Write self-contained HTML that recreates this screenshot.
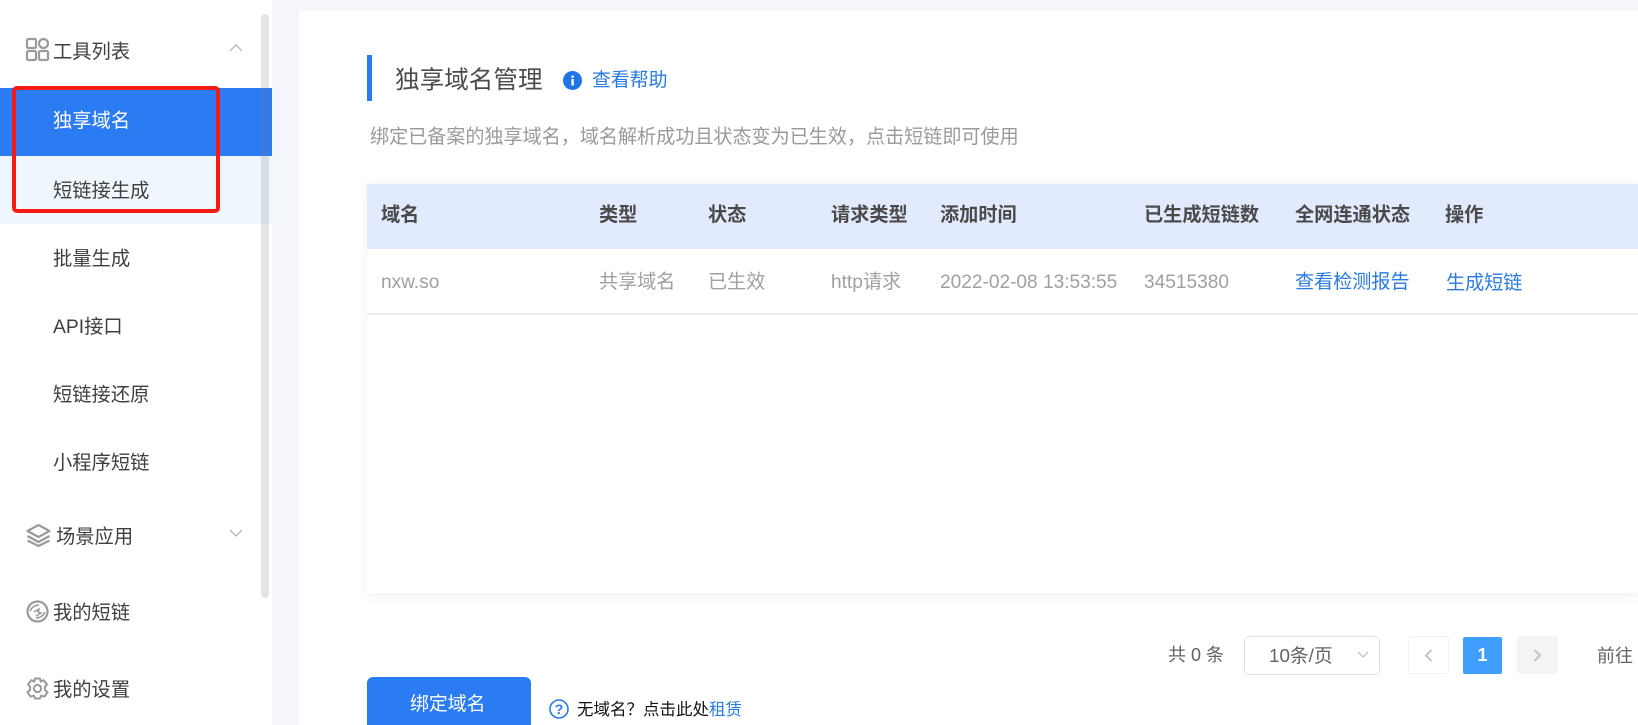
<!DOCTYPE html>
<html lang="zh">
<head>
<meta charset="utf-8">
<title>独享域名管理</title>
<style>
html,body{margin:0;padding:0;width:1638px;height:725px;overflow:hidden;background:#f4f6fc;}
body{position:relative;font-family:"Liberation Sans","Noto Sans CJK SC",sans-serif;}
.a{position:absolute;white-space:nowrap;}
.t{position:absolute;white-space:nowrap;line-height:26px;height:26px;}
.m{font-size:19.3px;color:#3f3f3f;}
.h{font-size:19.2px;font-weight:700;color:#4a4a4a;top:203px;}
.c{font-size:19.1px;color:#a0a0a0;top:270px;}
.l{color:#2a7ae4;}
svg{position:absolute;overflow:visible;}
</style>
</head>
<body>
<!-- sidebar -->
<div class="a" style="left:0;top:0;width:272px;height:725px;background:#fff;"></div>
<div class="a" style="left:0;top:88px;width:272px;height:68px;background:#2b7bf2;"></div>
<div class="a" style="left:0;top:156px;width:272px;height:68px;background:#eff6fe;"></div>

<svg style="left:26px;top:38px" width="23" height="23" viewBox="0 0 23 23" fill="none" stroke="#9a9a9a" stroke-width="2.2"><rect x="1" y="1" width="9" height="9" rx="1.5"/><circle cx="17.5" cy="5.5" r="4.5"/><rect x="1" y="13" width="9" height="9" rx="1.5"/><rect x="13" y="13" width="9" height="9" rx="1.5"/></svg>
<div class="t m" style="left:53px;top:40px;">工具列表</div>
<svg style="left:229px;top:43px" width="14" height="9" viewBox="0 0 14 9" fill="none" stroke="#a4a4a4" stroke-width="1"><path d="M1 8L7 2L13 8"/></svg>

<div class="t m" style="left:53px;top:109px;color:#fff;">独享域名</div>
<div class="t m" style="left:53px;top:179px;">短链接生成</div>
<div class="t m" style="left:53px;top:247px;">批量生成</div>
<div class="t m" style="left:53px;top:315px;">API接口</div>
<div class="t m" style="left:53px;top:383px;">短链接还原</div>
<div class="t m" style="left:53px;top:451px;">小程序短链</div>

<svg style="left:26px;top:524px" width="25" height="23" viewBox="0 0 25 23" fill="none" stroke="#9a9a9a" stroke-width="2.2" stroke-linejoin="round"><path d="M12.5 1L23.5 7L12.5 13L1.5 7Z"/><path d="M1.5 12L12.5 18L23.5 12"/><path d="M1.5 16.5L12.5 22L23.5 16.5"/></svg>
<div class="t m" style="left:56px;top:525px;">场景应用</div>
<svg style="left:229px;top:529px" width="14" height="9" viewBox="0 0 14 9" fill="none" stroke="#a4a4a4" stroke-width="1"><path d="M1 1L7 7L13 1"/></svg>

<svg style="left:26px;top:600px" width="23" height="23" viewBox="0 0 23 23" fill="none" stroke="#9a9a9a" stroke-width="2.2"><circle cx="11.5" cy="11.5" r="10"/><path stroke-width="1.5" d="M4 11C6 7 9 5 13 5M19 12C17 16 14 18 10 18M8 12L13 9L12 12L15 13L10 16"/></svg>
<div class="t m" style="left:53px;top:601px;">我的短链</div>

<svg style="left:26px;top:677px" width="23" height="23" viewBox="0 0 23 23" fill="none" stroke="#9a9a9a" stroke-width="2" stroke-linejoin="round"><path d="M9 1.5H14L14.8 4.6L17.6 3.2L21 7.4L18.9 9.8L19 13L21.5 15.2L18.5 19.6L15.2 18.6L14 21.5H9L7.8 18.6L4.5 19.6L1.5 15.2L4 13L4.1 9.8L2 7.4L5.4 3.2L8.2 4.6Z"/><circle cx="11.5" cy="11.5" r="3.6"/></svg>
<div class="t m" style="left:53px;top:678px;">我的设置</div>

<!-- sidebar scrollbar -->
<div class="a" style="left:261px;top:14px;width:8px;height:584px;border-radius:4px;background:rgba(110,125,140,.2);"></div>

<!-- red annotation -->
<div class="a" style="left:12px;top:86px;width:208px;height:126.5px;box-sizing:border-box;border:4px solid #f31b14;border-radius:5px;"></div>

<!-- main card -->
<div class="a" style="left:299px;top:11px;width:1339px;height:714px;background:#fff;"></div>

<div class="a" style="left:367px;top:55px;width:5px;height:46px;background:#2b7bf2;"></div>
<div class="t" style="left:395px;top:66px;height:30px;line-height:30px;font-size:24.6px;color:#4c4c4c;">独享域名管理</div>
<svg style="left:563px;top:71px" width="19" height="19" viewBox="0 0 19 19"><circle cx="9.5" cy="9.5" r="9.5" fill="#2274e6"/><rect x="8.4" y="8" width="2.4" height="6.5" fill="#fff"/><rect x="8.4" y="4.6" width="2.4" height="2.2" fill="#fff"/></svg>
<div class="t l" style="left:592px;top:68px;font-size:18.9px;">查看帮助</div>
<div class="t" style="left:370px;top:125px;font-size:19.09px;color:#9a9a9a;">绑定已备案的独享域名&#xFF0C;域名解析成功且状态变为已生效&#xFF0C;点击短链即可使用</div>

<!-- table -->
<div class="a" style="left:367px;top:184px;width:1271px;height:409px;background:#fff;box-shadow:0 2px 10px rgba(60,90,160,.1);"></div>
<div class="a" style="left:367px;top:184px;width:1271px;height:65px;background:#e1ebfd;"></div>
<div class="a" style="left:367px;top:313px;width:1271px;height:2px;background:#eeeeee;"></div>

<div class="t h" style="left:381px;">域名</div>
<div class="t h" style="left:599px;">类型</div>
<div class="t h" style="left:708px;">状态</div>
<div class="t h" style="left:831px;">请求类型</div>
<div class="t h" style="left:940px;">添加时间</div>
<div class="t h" style="left:1144px;">已生成短链数</div>
<div class="t h" style="left:1295px;">全网连通状态</div>
<div class="t h" style="left:1445px;">操作</div>

<div class="t c" style="left:381px;">nxw.so</div>
<div class="t c" style="left:599px;">共享域名</div>
<div class="t c" style="left:708px;">已生效</div>
<div class="t c" style="left:831px;">http请求</div>
<div class="t c" style="left:940px;">2022-02-08 13:53:55</div>
<div class="t c" style="left:1144px;">34515380</div>
<div class="t c l" style="left:1295px;color:#2a7ae4;">查看检测报告</div>
<div class="t c l" style="left:1446px;top:271px;color:#2a7ae4;">生成短链</div>

<!-- pagination -->
<div class="t" style="left:1168px;top:642px;font-size:18px;color:#606266;">共 0 条</div>
<div class="a" style="left:1244px;top:636px;width:136px;height:39px;box-sizing:border-box;border:1px solid #dcdfe6;border-radius:5px;background:#fff;"></div>
<div class="t" style="left:1269px;top:643px;font-size:18.8px;color:#606266;">10条/页</div>
<svg style="left:1357px;top:651px" width="12" height="7" viewBox="0 0 12 7" fill="none" stroke="#c0c4cc" stroke-width="1.4"><path d="M1 1L6 6L11 1"/></svg>
<div class="a" style="left:1408px;top:636px;width:41px;height:38px;box-sizing:border-box;border:1px solid #f1f1f1;border-radius:3px;background:#fff;"></div>
<svg style="left:1424px;top:649px" width="9" height="13" viewBox="0 0 9 13" fill="none" stroke="#c0c4cc" stroke-width="2"><path d="M7.5 1L2 6.5L7.5 12"/></svg>
<div class="a" style="left:1463px;top:637px;width:39px;height:37px;border-radius:2px;background:#409eff;color:#fff;font-size:18px;font-weight:700;line-height:37px;text-align:center;">1</div>
<div class="a" style="left:1517px;top:636px;width:41px;height:38px;border-radius:3px;background:#f4f4f5;"></div>
<svg style="left:1533px;top:649px" width="9" height="13" viewBox="0 0 9 13" fill="none" stroke="#c0c4cc" stroke-width="2"><path d="M1.5 1L7 6.5L1.5 12"/></svg>
<div class="t" style="left:1597px;top:643px;font-size:18px;color:#606266;">前往</div>

<!-- bottom -->
<div class="a" style="left:367px;top:677px;width:164px;height:60px;border-radius:6px;background:#2b7bf2;"></div>
<div class="t" style="left:410px;top:692px;font-size:18.9px;color:#fff;">绑定域名</div>
<svg style="left:549px;top:699px" width="20" height="20" viewBox="0 0 20 20"><circle cx="10" cy="10" r="9" fill="#fff" stroke="#2a7ae4" stroke-width="1.6"/><text x="10" y="15" text-anchor="middle" font-size="14" font-weight="700" fill="#2a7ae4" font-family="Liberation Sans">?</text></svg>
<div class="t" style="left:577px;top:697px;font-size:16.5px;color:#111;">无域名&#xFF1F;点击此处<span class="l">租赁</span></div>
</body>
</html>
